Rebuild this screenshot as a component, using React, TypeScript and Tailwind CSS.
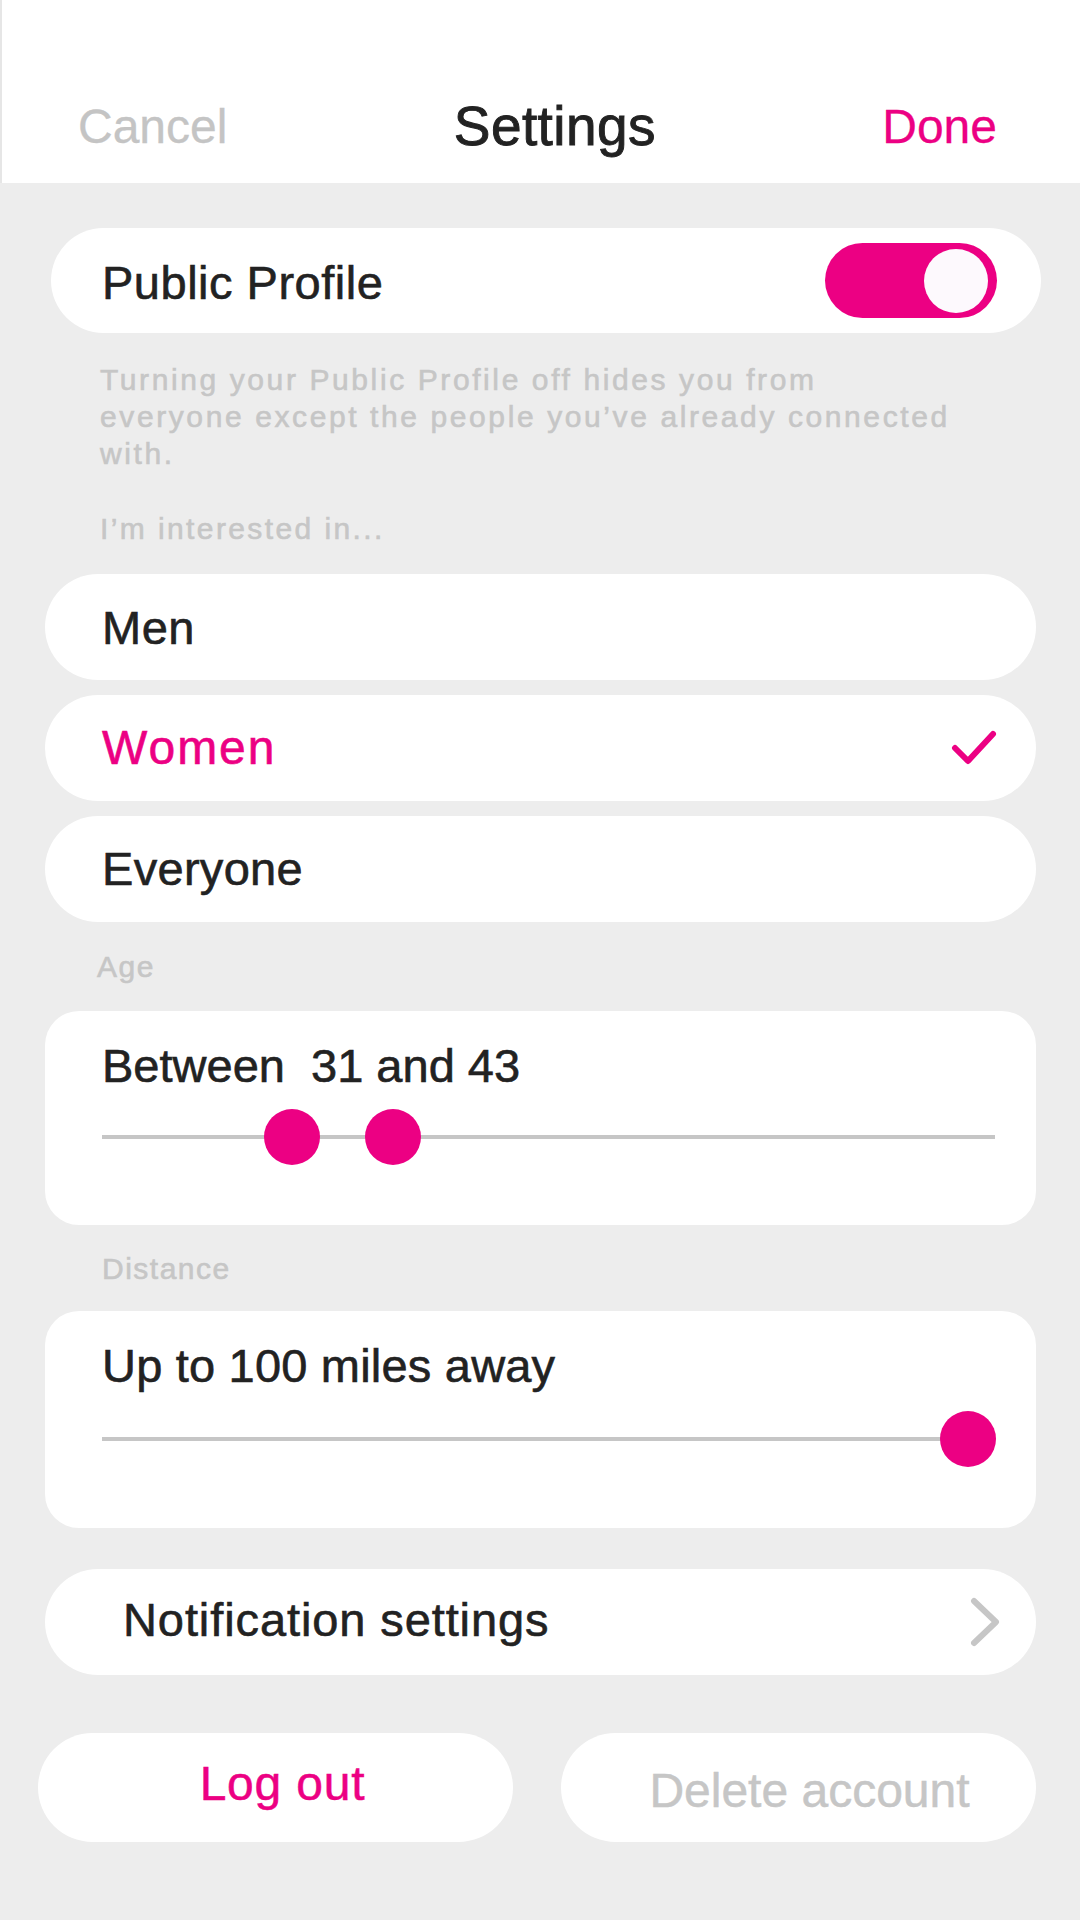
import React from "react";

const PINK = "#EC0083";

function Thumb({ left }: { left: number }) {
  return (
    <div
      className="absolute top-0 w-[56px] h-[56px] rounded-full bg-[#EC0083]"
      style={{ left }}
    />
  );
}

export default function App() {
  return (
    <div className="w-[1080px] h-[1920px] bg-[#EDEDED] font-['Liberation_Sans',Arial,sans-serif] text-[#222222] overflow-hidden">
      {/* Header */}
      <header className="h-[183px] bg-white border-l-2 border-[#E6E6E6] flex items-center justify-between pt-[70px] pl-[76px] pr-[83px]">
        <span className="text-[48px] text-[#C4C4C4] leading-none [-webkit-text-stroke:0.3px_#C4C4C4]">Cancel</span>
        <span className="text-[55px] leading-none tracking-[0.4px] [-webkit-text-stroke:0.9px_#222222]">Settings</span>
        <span className="text-[48px] text-[#EC0083] leading-none [-webkit-text-stroke:0.3px_#EC0083]">Done</span>
      </header>

      <main className="flex flex-col">
        {/* Public profile */}
        <div className="mt-[45px] ml-[51px] w-[990px] h-[105px] rounded-full bg-white flex items-center justify-between pl-[51px] pr-[44px]">
          <span className="pt-[4px] text-[47px] leading-none tracking-[0.5px] [-webkit-text-stroke:0.6px_#222222]">Public Profile</span>
          <div className="w-[172px] h-[75px] rounded-full bg-[#EC0083] flex items-center justify-end pr-[9px]">
            <div className="w-[64px] h-[64px] rounded-full bg-[#FDF9FD]" />
          </div>
        </div>

        <p className="mt-[28px] ml-[100px] w-[865px] text-[30px] leading-[37px] tracking-[2.6px] text-[#C6C6C6] [-webkit-text-stroke:0.6px_#C6C6C6]">
          Turning your Public Profile off hides you from everyone except the people you’ve already connected with.
        </p>

        <p className="mt-[38px] ml-[100px] text-[30px] leading-[37px] tracking-[2.4px] text-[#C6C6C6] [-webkit-text-stroke:0.6px_#C6C6C6]">
          I’m interested in...
        </p>

        {/* Options */}
        <div className="mt-[27px] ml-[45px] w-[991px] flex flex-col gap-[15px]">
          <div className="h-[106px] rounded-full bg-white flex items-center pl-[57px]">
            <span className="text-[47px] leading-none tracking-[0.5px] [-webkit-text-stroke:0.6px_#222222]">Men</span>
          </div>
          <div className="h-[106px] rounded-full bg-white flex items-center justify-between pl-[57px] pr-[39px]">
            <span className="text-[48px] leading-none tracking-[2px] text-[#EC0083] [-webkit-text-stroke:0.6px_#EC0083]">Women</span>
            <svg width="46" height="36" viewBox="0 0 46 36" fill="none">
              <polyline
                points="4,18 17,31 42,4"
                stroke={PINK}
                strokeWidth="6"
                strokeLinecap="round"
                strokeLinejoin="round"
              />
            </svg>
          </div>
          <div className="h-[106px] rounded-full bg-white flex items-center pl-[57px]">
            <span className="pb-[2px] text-[47px] leading-none tracking-[0.3px] [-webkit-text-stroke:0.6px_#222222]">Everyone</span>
          </div>
        </div>

        {/* Age */}
        <p className="mt-[26px] ml-[97px] text-[30px] leading-[37px] tracking-[1.5px] text-[#C6C6C6] [-webkit-text-stroke:0.6px_#C6C6C6]">Age</p>
        <div className="mt-[26px] ml-[45px] w-[991px] h-[214px] rounded-[34px] bg-white pt-[28px] pl-[57px] pr-[41px]">
          <p className="text-[47px] leading-[54px] whitespace-pre [-webkit-text-stroke:0.6px_#222222]">Between  31 and 43</p>
          <div className="relative mt-[16px] h-[56px]">
            <div className="absolute left-0 right-0 top-[26px] h-[4px] bg-[#C6C6C6]" />
            <Thumb left={162} />
            <Thumb left={263} />
          </div>
        </div>

        {/* Distance */}
        <p className="mt-[25px] ml-[102px] text-[30px] leading-[37px] tracking-[1.5px] text-[#C6C6C6] [-webkit-text-stroke:0.6px_#C6C6C6]">Distance</p>
        <div className="mt-[24px] ml-[45px] w-[991px] h-[217px] rounded-[34px] bg-white pt-[28px] pl-[57px] pr-[41px]">
          <p className="text-[47px] leading-[54px] tracking-[0.2px] [-webkit-text-stroke:0.6px_#222222]">Up to 100 miles away</p>
          <div className="relative mt-[18px] h-[56px]">
            <div className="absolute left-0 right-0 top-[26px] h-[4px] bg-[#C6C6C6]" />
            <Thumb left={838} />
          </div>
        </div>

        {/* Notification settings */}
        <div className="mt-[41px] ml-[45px] w-[991px] h-[106px] rounded-full bg-white flex items-center justify-between pl-[78px] pr-[36px]">
          <span className="pb-[6px] text-[47px] leading-none tracking-[0.9px] [-webkit-text-stroke:0.6px_#222222]">Notification settings</span>
          <svg width="30" height="52" viewBox="0 0 30 52" fill="none">
            <polyline
              points="4,5 26,26 4,47"
              stroke="#C6C6C6"
              strokeWidth="6"
              strokeLinecap="round"
              strokeLinejoin="round"
            />
          </svg>
        </div>

        {/* Buttons */}
        <div className="mt-[58px] ml-[38px] w-[998px] flex justify-between">
          <button className="w-[475px] h-[109px] rounded-full bg-white flex items-center justify-center pl-[14px] pb-[8px]">
            <span className="text-[48px] leading-none tracking-[0.8px] text-[#EC0083] [-webkit-text-stroke:0.5px_#EC0083]">Log out</span>
          </button>
          <button className="w-[475px] h-[109px] rounded-full bg-white flex items-center justify-center pl-[22px] pt-[6px]">
            <span className="text-[48px] leading-none text-[#C6C6C6] [-webkit-text-stroke:0.5px_#C6C6C6]">Delete account</span>
          </button>
        </div>
      </main>
    </div>
  );
}
